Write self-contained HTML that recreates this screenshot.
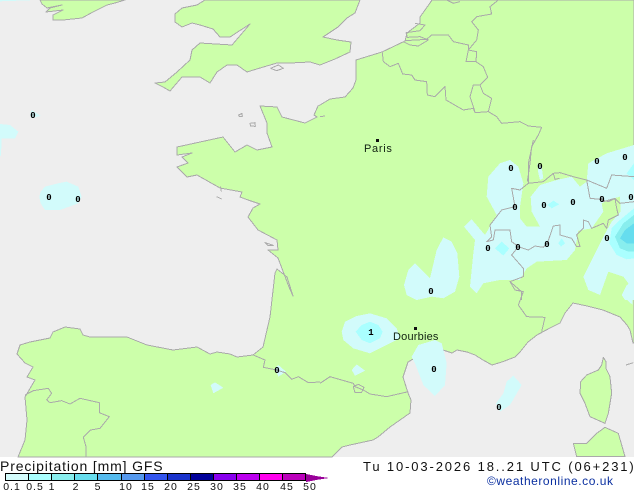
<!DOCTYPE html>
<html><head><meta charset="utf-8"><title>Precipitation</title>
<style>
html,body{margin:0;padding:0;background:#fff;width:634px;height:490px;overflow:hidden}
svg{display:block}
polygon,polyline,rect{shape-rendering:crispEdges}
text{font-family:"Liberation Sans",sans-serif}
.ln{fill:none;stroke:#aaaaaa;stroke-width:3;stroke-linejoin:round}
.c1{fill:#d2fbfb}.c2{fill:#aaffff}.c3{fill:#88eeee}.c4{fill:#66ddee}
.g{fill:#ccffaa}
.st{font:bold 9px "Liberation Mono",monospace;text-anchor:middle;fill:#000}
.lb{font-size:10.5px;letter-spacing:1px;text-anchor:middle;fill:#111}
</style></head><body>
<svg width="634" height="490" viewBox="0 0 634 490" xmlns="http://www.w3.org/2000/svg">
<rect width="634" height="490" fill="#fff"/>
<rect width="634" height="457" fill="#eeeeee"/>
<!-- land -->
<g class="g" stroke="#aaaaaa" stroke-width="1" stroke-linejoin="round">
<polygon points="432,0 634,0 634,343 633,343 630,330 627,325 620,317 603,310 587,306 573,303 565,313 560,323 550,328 537,335 528,342 520,352 515,357 502,362 492,365 483,360 475,355 467,352 457,350 452,353 443,350 435,347 420,355 408,362 403,377 408,393 411,400 410,413 390,427 378,437 373,440 350,445 342,447 332,457 18,457 25,440 27,420 25,397 35,380 27,377 33,367 25,363 17,354 20,345 30,342 50,338 53,332 65,327 80,329 83,335 90,337 127,337 147,345 173,350 197,347 210,354 217,352 230,354 237,357 253,355 263,347 270,317 275,273 277,269 287,277 293,296 289,287 278,258 268,250 278,250 277,240 258,230 248,217 253,208 260,204 248,200 240,197 242,192 220,188 197,175 187,177 177,167 188,163 182,157 192,153 177,155 177,147 200,142 223,137 235,152 247,145 257,150 272,147 267,133 267,123 260,106 277,107 282,117 305,123 317,117 314,115 318,106 320,105 330,99 345,97 353,88 356,80 356,60 382,52 405,41 407,33 420,23 420,17 430,3"/>
<polygon points="205,0 197,5 182,8 175,14 175,22 182,27 192,23 200,25 213,29 220,37 230,37 250,24 232,45 200,43 192,50 190,60 177,72 165,82 155,83 163,87 170,91 182,77 200,77 210,83 217,72 227,65 237,65 247,72 260,68 277,63 290,63 310,62 320,65 335,59 350,52 351,42 337,40 323,37 338,27 347,18 355,13 360,0"/>
<polygon points="40,0 42,4 47,8 62,5 50,8 46,12 63,10 53,15 53,20 63,20 82,18 93,12 97,10 107,5 115,3 125,0"/>
<g transform="translate(320,230) scale(.33333)" stroke-width="3">
<polygon points="850,382 858,395 858,415 870,440 875,490 865,550 855,580 810,560 795,520 780,490 782,455 800,435 835,420 845,405"/>
<polygon points="855,592 895,610 915,680 770,680 760,640 800,640 830,610"/>
</g>
</g>
<!-- precipitation -->
<g transform="scale(.33333)">
<polygon class="c1" points="0,372 30,375 55,395 45,415 5,415 3,465 0,470"/>
<polygon class="c1" points="0,0 110,0 0,4"/>
<polygon class="c1" points="95,330 122,348 95,355 90,345"/>
<polygon class="c1" points="118,590 122,575 135,560 175,550 200,545 235,560 245,590 235,610 180,630 135,630 122,610"/>
</g>
<g transform="translate(0,230) scale(.33333)">
<polygon class="c1" points="632,465 645,457 670,473 640,490"/>
<polygon class="c1" points="825,415 835,405 858,425 835,440"/>
</g>
<g transform="translate(460,140) scale(.33333)">
<polygon class="c1" points="150,60 175,80 190,130 180,200 180,235 200,260 240,260 215,215 212,170 240,135 290,120 335,110 360,140 380,125 385,70 440,40 522,15 522,480 495,480 485,465 505,430 490,410 445,395 420,465 385,450 370,410 400,350 430,290 455,245 482,215 480,170 450,178 425,190 430,215 395,265 355,272 345,330 320,360 230,365 200,385 180,420 120,420 70,430 50,460 30,440 40,340 45,300 12,260 35,238 75,285 110,225 80,170 85,110 120,70"/>
<polygon class="c1" points="232,70 245,80 250,115 240,120 235,100"/>
<polygon class="c2" points="125,305 148,325 130,347 105,325"/>
<polygon class="c2" points="262,195 280,182 298,193 275,205"/>
<polygon class="c2" points="305,295 315,310 303,320 295,310"/>
<polygon class="c2" points="522,70 500,100 522,120"/>
<polygon class="c2" points="522,205 480,240 455,265 448,310 470,345 500,358 522,355"/>
<polygon class="c3" points="522,225 490,250 465,290 480,325 505,335 522,335"/>
<polygon class="c4" points="522,250 495,270 480,295 500,310 522,310"/>
</g>
<g transform="translate(320,230) scale(.33333)">
<polygon class="c1" points="252,165 265,120 285,100 330,145 350,60 370,22 395,35 412,70 418,140 405,185 370,205 335,200 290,210 260,195"/>
<polygon class="c1" points="65,305 75,275 110,258 150,250 200,265 230,295 240,325 200,345 150,370 100,355 70,330"/>
<polygon class="c2" points="107,305 125,285 150,275 175,285 188,305 180,325 150,340 125,330"/>
<polygon class="c1" points="275,380 295,345 345,330 365,340 380,400 375,465 345,498 310,465 285,400"/>
<polygon class="c1" points="528,520 550,490 560,455 580,437 605,465 570,525 540,545"/>
<polygon class="c1" points="95,420 110,403 135,422 105,437"/>
<polygon class="c1" points="905,195 920,165 938,195 938,225"/>
</g>
<!-- coast over precip, borders -->
<g transform="translate(320,0) scale(.33333)" class="ln">
<polyline points="187,157 190,185 210,200 235,190 248,222 275,225 285,240 320,245 322,285 345,290 375,260 378,300 430,330 460,325 465,338 505,335 530,350 545,370 600,365 625,378 665,382 655,405 635,440 630,490 622,545"/>
<polyline points="505,335 515,295 490,280 480,255 460,255 450,290 465,335"/>
<polyline points="480,255 503,232 490,200 468,185 438,185 445,150 470,120 475,90 455,65 470,50 515,42 510,20 535,0"/>
<polyline points="255,122 320,118 335,105 385,105 400,125 445,135 445,150 470,155 468,185"/>
<polyline points="250,125 270,135 295,138 325,120 300,110 262,112 258,98 300,92 315,75 285,70"/>
<polyline points="380,0 400,10 420,5"/>
<polyline points="0,350 15,348"/>
</g>
<g transform="translate(460,140) scale(.33333)" class="ln">
<polyline points="220,0 205,70 205,130 180,150 155,145 165,200 125,210 90,255 95,290 80,305 100,300 105,270 150,270 155,305 175,320 155,345 190,385 190,410 150,425 185,455 185,480"/>
<polyline points="175,320 205,330 225,318 250,322 262,310 280,258 300,255 300,285 335,295 350,320 360,320 350,285 370,265 370,240 385,245 395,265 430,250 440,265 445,240 475,225 470,205 465,175 430,185 420,170"/>
<polyline points="205,130 250,125 280,100 300,98 340,110 380,120 440,145 455,105 522,110"/>
<polyline points="380,120 390,175 420,178 445,185 465,175 480,190 522,185"/>
<polyline points="280,100 285,118 298,115"/>
</g>
<g transform="translate(320,230) scale(.33333)" class="ln">
<polyline points="570,155 585,180 610,185 595,225 620,260 675,262 665,305"/>
<polyline points="0,460 30,440 65,450 100,460 105,470 130,480 150,492 200,500 265,485"/>
<polygon points="100,470 115,463 132,472 125,487 105,488"/>
<polyline points="918,405 940,398"/>
</g>
<g transform="translate(0,230) scale(.33333)" class="ln">
<polyline points="760,375 795,390 790,412 830,420 855,428 875,448 895,440 925,458 960,456"/>
<polyline points="75,495 100,482 145,475 155,490 140,510 150,518 185,512 210,522 240,505 298,518 298,548 328,560 300,595 272,600 250,622 258,650 258,680"/>
<polygon points="795,38 820,46 803,46"/>
</g>
<g transform="scale(.33333)" class="ln">
<polygon points="716,345 726,340 727,349 718,349"/>
<polygon points="750,370 765,368 766,379 752,378"/>
<polyline points="650,590 665,597"/>
<polyline points="662,560 664,575"/>
<polyline points="812,205 835,195 850,205 830,212 812,205"/>
</g>
<!-- stations -->
<g>
<text class="st" x="33" y="118">0</text><text class="st" x="49" y="200">0</text><text class="st" x="78" y="202">0</text>
<text class="st" x="511" y="171">0</text><text class="st" x="540" y="169">0</text><text class="st" x="597" y="164">0</text><text class="st" x="625" y="160">0</text>
<text class="st" x="515" y="210">0</text><text class="st" x="544" y="208">0</text><text class="st" x="573" y="205">0</text><text class="st" x="602" y="202">0</text><text class="st" x="631" y="200">0</text>
<text class="st" x="488" y="251">0</text><text class="st" x="518" y="250">0</text><text class="st" x="547" y="247">0</text><text class="st" x="607" y="241">0</text>
<text class="st" x="431" y="294">0</text><text class="st" x="434" y="372">0</text><text class="st" x="499" y="410">0</text><text class="st" x="371" y="335">1</text><text class="st" x="277" y="373">0</text>
</g>
<!-- cities -->
<rect x="376" y="139" width="3" height="3" fill="#111"/>
<text x="364" y="152" font-size="11" letter-spacing=".7" fill="#112211">Paris</text>
<rect x="414" y="327" width="3" height="3" fill="#111"/>
<text x="393" y="340" font-size="11" letter-spacing=".2" fill="#112211">Dourbies</text>
<!-- footer -->
<text x="0" y="471" font-size="14" letter-spacing=".85" fill="#111">Precipitation [mm] GFS</text>
<g stroke="#000" stroke-width="1">
<rect x="5.5" y="473.5" width="23" height="7" fill="#d4fcfc"/>
<rect x="28.5" y="473.5" width="23" height="7" fill="#aaffff"/>
<rect x="51.5" y="473.5" width="23" height="7" fill="#88eeee"/>
<rect x="74.5" y="473.5" width="23" height="7" fill="#66ddee"/>
<rect x="97.5" y="473.5" width="24" height="7" fill="#55bbee"/>
<rect x="121.5" y="473.5" width="23" height="7" fill="#5599ee"/>
<rect x="144.5" y="473.5" width="23" height="7" fill="#3355ee"/>
<rect x="167.5" y="473.5" width="23" height="7" fill="#1a33cc"/>
<rect x="190.5" y="473.5" width="23" height="7" fill="#000099"/>
<rect x="213.5" y="473.5" width="23" height="7" fill="#8800ee"/>
<rect x="236.5" y="473.5" width="23" height="7" fill="#bb00ee"/>
<rect x="259.5" y="473.5" width="23" height="7" fill="#ff00ee"/>
<rect x="282.5" y="473.5" width="23" height="7" fill="#bb00bb"/>
</g>
<polygon points="306,474 316,476 329,478 316,480 306,482" fill="#990099"/>
<g>
<text class="lb" x="12" y="490">0.1</text><text class="lb" x="35" y="490">0.5</text><text class="lb" x="52" y="490">1</text><text class="lb" x="76" y="490">2</text><text class="lb" x="98" y="490">5</text><text class="lb" x="126" y="490">10</text><text class="lb" x="148" y="490">15</text><text class="lb" x="171" y="490">20</text><text class="lb" x="194" y="490">25</text><text class="lb" x="217" y="490">30</text><text class="lb" x="240" y="490">35</text><text class="lb" x="263" y="490">40</text><text class="lb" x="287" y="490">45</text><text class="lb" x="310" y="490">50</text>
</g>
<text x="363" y="471" font-size="13" letter-spacing="1.87" fill="#111">Tu 10-03-2026 18..21 UTC (06+231)</text>
<text x="487" y="485" font-size="12" letter-spacing=".55" fill="#0a2fa0">©weatheronline.co.uk</text>
</svg>
</body></html>
